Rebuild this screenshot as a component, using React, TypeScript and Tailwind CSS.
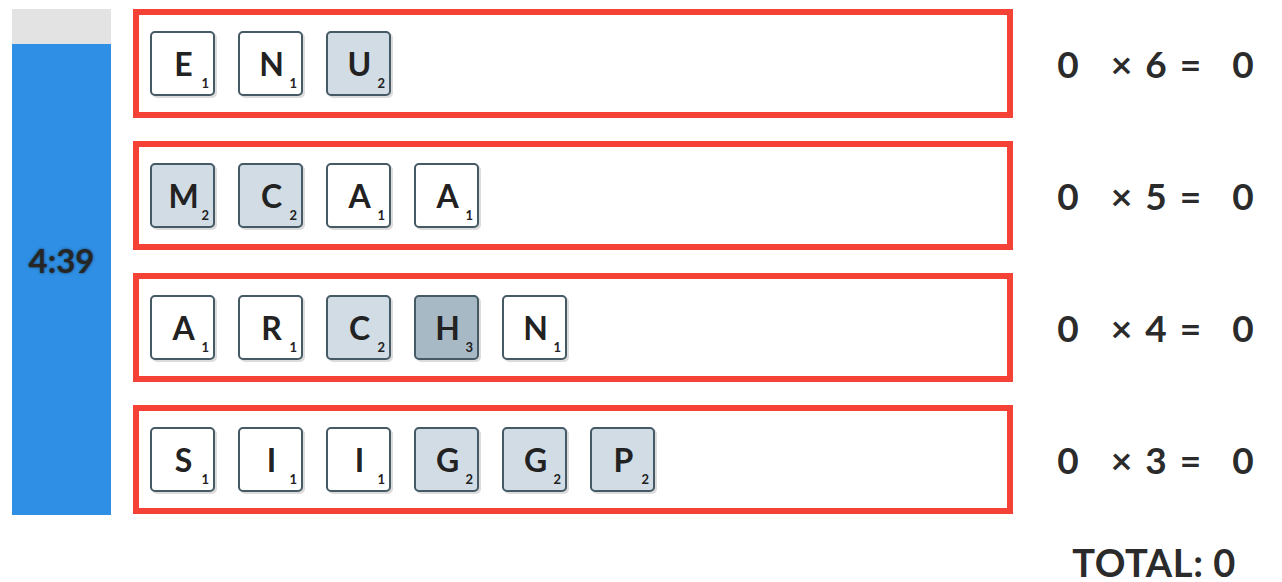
import React from "react";

type Tile = { letter: string; value: number };

const rows: { tiles: Tile[]; multiplier: number }[] = [
  { tiles: [{ letter: "E", value: 1 }, { letter: "N", value: 1 }, { letter: "U", value: 2 }], multiplier: 6 },
  { tiles: [{ letter: "M", value: 2 }, { letter: "C", value: 2 }, { letter: "A", value: 1 }, { letter: "A", value: 1 }], multiplier: 5 },
  {
    tiles: [
      { letter: "A", value: 1 },
      { letter: "R", value: 1 },
      { letter: "C", value: 2 },
      { letter: "H", value: 3 },
      { letter: "N", value: 1 },
    ],
    multiplier: 4,
  },
  {
    tiles: [
      { letter: "S", value: 1 },
      { letter: "I", value: 1 },
      { letter: "I", value: 1 },
      { letter: "G", value: 2 },
      { letter: "G", value: 2 },
      { letter: "P", value: 2 },
    ],
    multiplier: 3,
  },
];

// tile colour by letter value
const tileBg: Record<number, string> = {
  1: "bg-white",
  2: "bg-[#d1dce5]",
  3: "bg-[#a8b9c6]",
};

function LetterTile({ tile }: { tile: Tile }) {
  return (
    <div
      className={`relative flex h-[65px] w-[65px] items-center justify-center rounded-[5px] border-2 border-[#455a64] shadow-[2px_2px_0_#dcdcdc] ${tileBg[tile.value]}`}
    >
      <span className="pl-[2px] text-[32px] leading-none font-bold text-[#222]">{tile.letter}</span>
      <span className="absolute right-[4px] bottom-[4px] text-[13px] leading-none font-bold text-[#222]">
        {tile.value}
      </span>
    </div>
  );
}

export default function App() {
  return (
    <div
      className="h-[582px] w-[1282px] overflow-hidden bg-white text-[#2b2b2b]"
      style={{ fontFamily: "Lato, 'Open Sans', sans-serif" }}
    >
      <div className="flex pt-[9px] pl-[12px]">
        {/* Timer */}
        <div className="relative flex h-[506px] w-[99px] flex-col">
          <div className="h-[35px] bg-[#e3e3e3]" />
          <div className="flex-1 bg-[#2f8fe4]" />
          <div className="absolute inset-0 flex items-center justify-center pb-[4px]">
            <span className="text-[33px] leading-none font-bold text-[#262626] [text-shadow:0_0_3px_rgba(0,0,0,0.55)]">
              4:39
            </span>
          </div>
        </div>

        {/* Word rows */}
        <div className="ml-[22px] flex w-[880px] flex-col gap-[23px]">
          {rows.map((row, i) => (
            <div
              key={i}
              className="flex h-[109px] items-center gap-[23px] border-[6px] border-[#f44336] pl-[11px]"
            >
              {row.tiles.map((t, j) => (
                <LetterTile key={j} tile={t} />
              ))}
            </div>
          ))}
        </div>

        {/* Scores */}
        <div className="flex flex-col gap-[23px] pl-[37px]">
          {rows.map((row, i) => (
            <div key={i} className="flex h-[109px] items-center text-[37px] leading-none font-bold">
              <span className="w-[36px] text-center">0</span>
              <span className="ml-[14px] w-[112px] text-center [word-spacing:4px]">× {row.multiplier} =</span>
              <span className="ml-[13px] w-[36px] text-center">0</span>
            </div>
          ))}
        </div>
      </div>

      <div className="flex justify-end pt-[30px] pr-[46px]">
        <span className="text-[38px] leading-[34px] font-bold tracking-[0.6px]">TOTAL: 0</span>
      </div>
    </div>
  );
}
